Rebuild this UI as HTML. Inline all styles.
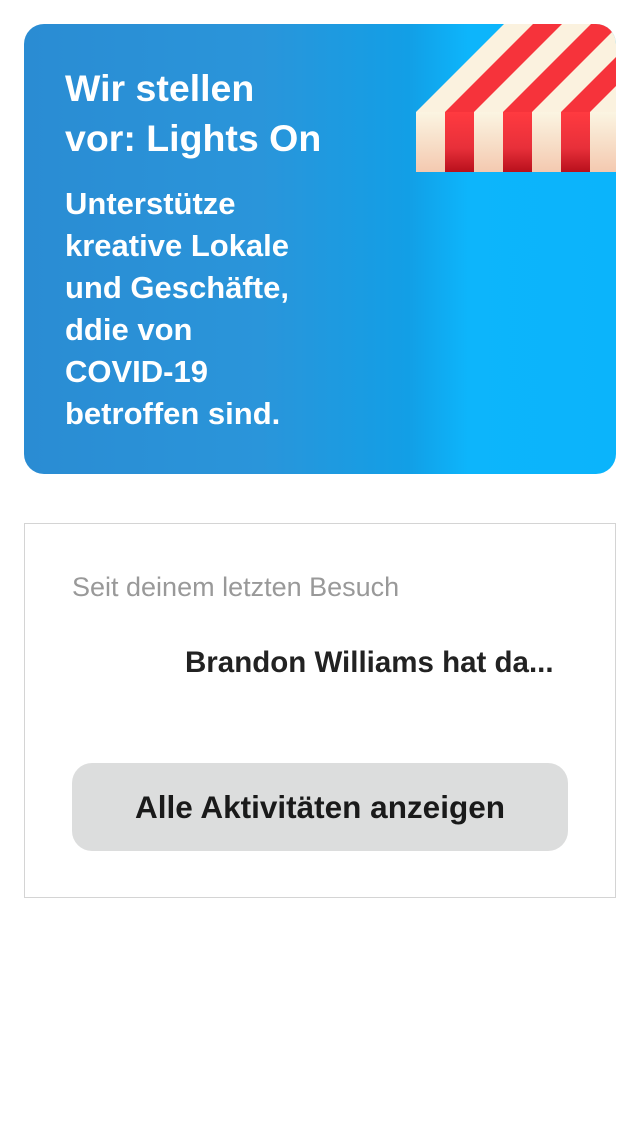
<!DOCTYPE html>
<html><head><meta charset="utf-8"><style>
body{margin:0;width:640px;height:1136px;background:#fff;font-family:"Liberation Sans",sans-serif;position:relative;overflow:hidden}
.card{position:absolute;left:24px;top:24px;width:592px;height:450px;border-radius:20px;overflow:hidden;background:linear-gradient(90deg,#2a8cd3 0%,#2a95da 40%,#129fe6 65%,#0db5fb 75%,#0bb4fb 100%)}
.card svg{position:absolute;left:0;top:0}
.t1{position:absolute;left:41px;top:39px;color:#fff;font-size:37.5px;font-weight:bold;line-height:50px}
.t2{position:absolute;left:41px;top:159px;color:#fff;font-size:31px;font-weight:bold;line-height:42px}
.box{position:absolute;left:24px;top:523px;width:590px;height:373px;border:1px solid #d4d4d4}
.s{position:absolute;left:47px;top:48px;color:#999;font-size:27px}
.b{position:absolute;left:160px;top:122px;color:#222;font-size:29.5px;font-weight:bold}
.btn{position:absolute;left:47px;top:239px;width:496px;height:88px;border-radius:20px;background:#dcdddd;color:#1a1a1a;font-size:31.5px;font-weight:bold;text-align:center;line-height:88px}
</style></head><body>
<div class="card">
<svg width="592" height="450" viewBox="24 24 592 450">
<defs><clipPath id="c"><polygon points="416,112 504,24 616,24 616,112"/></clipPath>
<linearGradient id="r" x1="0" y1="0" x2="0" y2="1"><stop offset="0" stop-color="#ff3a40"/><stop offset="0.6" stop-color="#e8303a"/><stop offset="1" stop-color="#b8101c"/></linearGradient>
<linearGradient id="w" x1="0" y1="0" x2="0" y2="1"><stop offset="0" stop-color="#fbf5e2"/><stop offset="1" stop-color="#f4c9b0"/></linearGradient>
</defs>
<g clip-path="url(#c)">
<rect x="400" y="20" width="230" height="100" fill="#fbf2df"/>
<polygon points="445,112 474,112 562,24 533,24" fill="#f6333b"/>
<polygon points="503,112 532,112 620,24 591,24" fill="#f6333b"/>
<polygon points="561,112 590,112 678,24 649,24" fill="#f6333b"/>
</g>
<rect x="416" y="112" width="200" height="60" fill="url(#w)"/>
<rect x="445" y="112" width="29" height="60" fill="url(#r)"/>
<rect x="503" y="112" width="29" height="60" fill="url(#r)"/>
<rect x="561" y="112" width="29" height="60" fill="url(#r)"/>
</svg>
<div class="t1">Wir stellen<br>vor: Lights On</div>
<div class="t2">Unterstütze<br>kreative Lokale<br>und Geschäfte,<br>ddie von<br>COVID-19<br>betroffen sind.</div>
</div>
<div class="box">
<div class="s">Seit deinem letzten Besuch</div>
<div class="b">Brandon Williams hat da...</div>
<div class="btn">Alle Aktivitäten anzeigen</div>
</div>
</body></html>
